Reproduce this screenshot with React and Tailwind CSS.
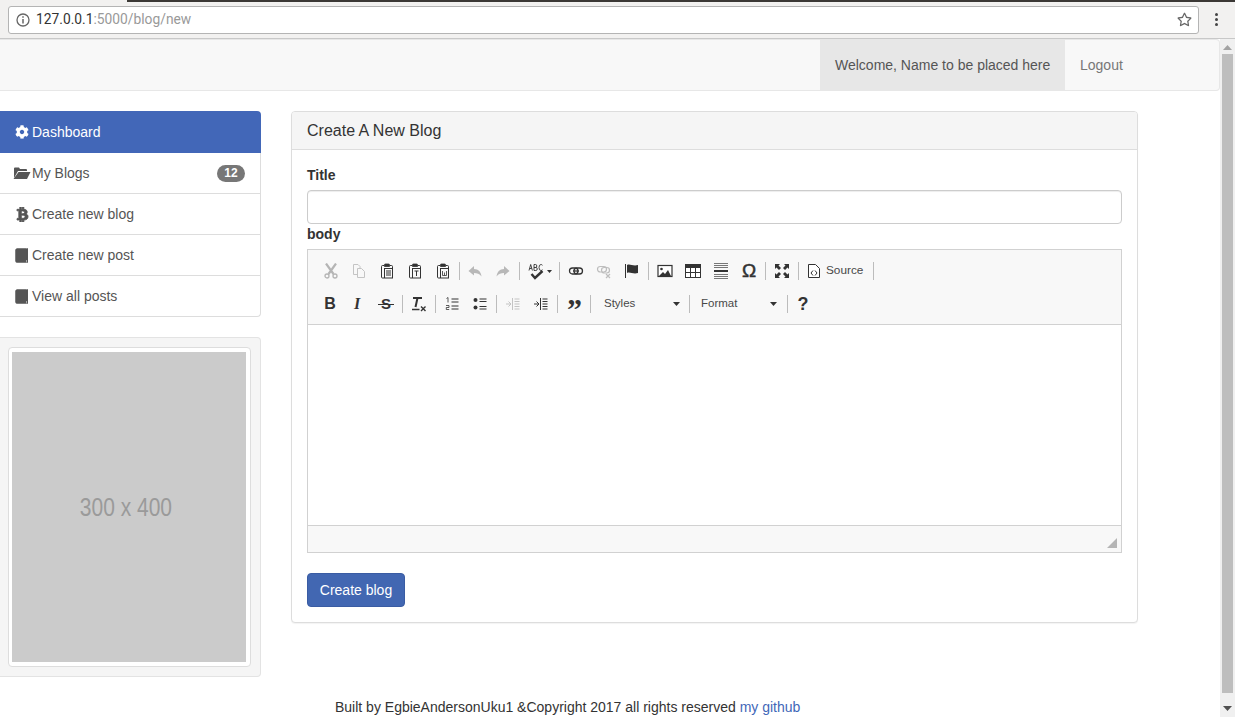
import React from "react";
import { FaCog, FaBtc, FaRegStar } from "react-icons/fa";

const I = ({ children, c = "#333", w = 16, h = 16 }) => (
  <svg width={w} height={h} viewBox={`0 0 ${w} ${h}`} fill="none" stroke={c} className="block">
    {children}
  </svg>
);

const Clip = ({ children }) => (
  <I c="#333">
    <path d="M5 2.500H3.500Q2.500 2.500 2.500 3.500V14Q2.500 15 3.500 15H5M11 2.500H12.500Q13.500 2.500 13.500 3.500V5.500" strokeWidth="1" />
    <path d="M5.500 3.500V1.800Q5.500 1 6.300 1H9.700Q10.500 1 10.500 1.800V3.500Z" fill="#333" strokeWidth="0.8" />
    {children}
  </I>
);

const icons = {
  cut: (
    <I c="#b5b5b5">
      <path d="M3 0.500l7.500 10.500M13 0.500L5.500 11" strokeWidth="2.200" />
      <circle cx="4" cy="13" r="2" strokeWidth="1.300" />
      <circle cx="12" cy="13" r="2" strokeWidth="1.300" />
    </I>
  ),
  copy: (
    <I c="#c4c4c4">
      <path d="M6 11.500H2.500V1.500H7L9 3.500V5M6.500 5.500H10.500L13.500 8.500V14.500H6.500Z" strokeWidth="1" />
    </I>
  ),
  paste: (
    <Clip>
      <rect x="5.500" y="5.500" width="8" height="9.500" fill="#f8f8f8" strokeWidth="1" />
      <path d="M7 8h5M7 10h5M7 12h5" strokeWidth="1" />
    </Clip>
  ),
  pasteT: (
    <Clip>
      <rect x="5.500" y="5.500" width="8" height="9.500" fill="#f8f8f8" strokeWidth="1" />
      <path d="M7.500 8h4M9.500 8v5" strokeWidth="1" />
    </Clip>
  ),
  pasteW: (
    <Clip>
      <rect x="5.500" y="5.500" width="8" height="9.500" fill="#f8f8f8" strokeWidth="1" />
      <path d="M7.500 8v4.500h4V8M9.500 9.500v3" strokeWidth="0.800" />
    </Clip>
  ),
  undo: (
    <I>
      <path d="M7 3L1.500 8 7 12.500V10C10 10 12.500 10.500 14.500 13.500 14 9 11.500 6 7 6Z" fill="#b8b8b8" stroke="none" />
    </I>
  ),
  redo: (
    <I>
      <path d="M9 3L14.500 8 9 12.500V10C6 10 3.500 10.500 1.500 13.500 2 9 4.500 6 9 6Z" fill="#b8b8b8" stroke="none" />
    </I>
  ),
  spell: (
    <div className="flex items-center">
      <svg width="18" height="17" viewBox="0 0 18 17" fill="none" stroke="#333" className="block">
        <path d="M1 7.500L2.700 1.500 4.400 7.500M1.700 5.500H3.700" strokeWidth="0.900" />
        <path d="M6 1.500V7.500H7.800Q9.300 7.500 9.300 5.900 9.300 4.500 7.800 4.500H6M6 4.500H7.600Q8.800 4.500 8.800 3 8.800 1.500 7.600 1.500H6" strokeWidth="0.900" />
        <path d="M14.500 2.300Q13.800 1.500 13 1.500 11 1.500 11 4.500 11 7.500 13 7.500 13.800 7.500 14.500 6.700" strokeWidth="0.900" />
        <path d="M3.500 11L7 15 14.500 8" strokeWidth="2.400" />
      </svg>
      <svg width="5" height="3" viewBox="0 0 5 3" className="ml-px mt-px"><path d="M0 0h5L2.500 3z" fill="#333" /></svg>
    </div>
  ),
  link: (
    <I>
      <rect x="1.500" y="5" width="8.500" height="6" rx="3" strokeWidth="1.300" />
      <rect x="6" y="5" width="8.500" height="6" rx="3" strokeWidth="1.300" />
      <path d="M5 8h6" strokeWidth="1.300" />
    </I>
  ),
  unlink: (
    <I c="#bdbdbd">
      <rect x="1.500" y="3.500" width="9" height="5.500" rx="2.700" strokeWidth="1.200" />
      <rect x="5.500" y="4.500" width="8" height="5.500" rx="2.700" strokeWidth="1.200" />
      <path d="M10 11l4 4M14 11l-4 4" strokeWidth="1.200" />
    </I>
  ),
  anchor: (
    <I>
      <path d="M1.500 1v14" strokeWidth="1" />
      <path d="M3 2C6 .5 9 3.500 14 2V10C9 11.500 6 8.500 3 10Z" fill="#333" stroke="none" />
    </I>
  ),
  image: (
    <I>
      <rect x="1" y="2.500" width="14" height="11" fill="#fff" strokeWidth="1.200" />
      <circle cx="4.500" cy="6" r="1.300" fill="#333" stroke="none" />
      <path d="M2 13l4-4 2 2 3-4 3 6z" fill="#333" stroke="none" />
    </I>
  ),
  table: (
    <I>
      <rect x="0.500" y="1.500" width="15" height="13" fill="#fff" strokeWidth="1" />
      <rect x="0.500" y="1.500" width="15" height="3" fill="#333" strokeWidth="1" />
      <path d="M0.500 9.500h15M5.500 4v10M10.500 4v10" strokeWidth="1" />
    </I>
  ),
  hr: (
    <I>
      <path d="M1 0.500h14M1 2.500h14M1 4.500h14M1 11.500h14M1 13.500h14M1 15.500h14" stroke="#777" strokeWidth="1" />
      <path d="M1 8h14" strokeWidth="2" />
    </I>
  ),
  omega: <span className="text-[19px] leading-4 font-normal text-[#333] [-webkit-text-stroke:0.5px_#333] font-['Liberation_Sans',sans-serif]">Ω</span>,
  max: (
    <I>
      <path d="M1 1h5L4.500 2.500 7 5 5 7 2.500 4.500 1 6ZM15 1v5L13.500 4.500 11 7 9 5 11.500 2.500 10 1ZM1 15v-5l1.500 1.500L5 9l2 2-2.500 2.500L6 15ZM15 15h-5l1.500-1.500L9 11l2-2 2.500 2.500L15 10Z" fill="#333" stroke="none" />
    </I>
  ),
  source: (
    <I>
      <path d="M2.500 1.500H9.500L13.500 5.500V14.500H2.500Z" fill="#fff" strokeWidth="1" />
      <path d="M7 7.500L5 10l2 2.500M9 7.500l2 2.500-2 2.500" strokeWidth="1" />
    </I>
  ),
  bold: <span className="text-[16px] leading-4 font-bold text-[#333] font-['Liberation_Sans',sans-serif]">B</span>,
  italic: <span className="relative left-[-1px] text-[16px] leading-4 font-bold italic text-[#333] font-['Liberation_Serif',serif]">I</span>,
  strike: (
    <span className="relative text-[15px] leading-4 font-bold text-[#333] font-['Liberation_Sans',sans-serif]">
      S<span className="absolute left-[-3px] right-[-3px] top-[8px] h-px bg-[#333]"></span>
    </span>
  ),
  removeFormat: (
    <I>
      <path d="M2 2h9" strokeWidth="2" />
      <path d="M6.500 2L4.500 11" strokeWidth="2" />
      <path d="M1 13.500h7.500" strokeWidth="1.500" />
      <path d="M10 10.500l4.500 4.500M14.500 10.500L10 15" strokeWidth="1.400" />
    </I>
  ),
  ol: (
    <I>
      <path d="M2.500 2.500L4 1.500V6.500" strokeWidth="0.800" />
      <path d="M2 9.500H5V11.500H2.300V13.500H5.200" strokeWidth="0.800" />
      <path d="M7.500 3h7M7.500 6h7M7.500 10h7M7.500 13h7" strokeWidth="1" />
    </I>
  ),
  ul: (
    <I>
      <circle cx="3.500" cy="4" r="2" fill="#333" stroke="none" />
      <circle cx="3.500" cy="11.500" r="2" fill="#333" stroke="none" />
      <path d="M7.500 3h7M7.500 5.500h7M7.500 10.500h7M7.500 13h7" strokeWidth="1" />
    </I>
  ),
  outdent: (
    <I c="#c4c4c4">
      <path d="M7.500 2v12M9.500 3h5M9.500 5.500h5M9.500 8h5M9.500 10.500h5M9.500 13h5" strokeWidth="1" />
      <path d="M1 8h4M3.500 5.500L6 8l-2.500 2.500" strokeWidth="1" />
    </I>
  ),
  indent: (
    <I>
      <path d="M7.500 2v12M9.500 3h5M9.500 5.500h5M9.500 8h5M9.500 10.500h5M9.500 13h5" strokeWidth="1" />
      <path d="M1 8h4M3.500 5.500L6 8l-2.500 2.500" strokeWidth="1" />
    </I>
  ),
  quote: <span className="relative top-[5px] text-[30px] leading-4 font-bold text-[#333] font-['Liberation_Serif',serif] tracking-[-1px]">”</span>,
  help: <span className="text-[18px] leading-4 font-bold text-[#333] font-['Liberation_Sans',sans-serif]">?</span>,
};

const Btn = ({ n, w = "w-[28px]" }) => (
  <div className={`h-[24px] ${w} flex items-center justify-center shrink-0`}>{icons[n]}</div>
);

const Sep = ({ cls = "ml-[2px] mr-[2px]" }) => <div className={`w-px h-[18px] bg-[#bcbcbc] shrink-0 ${cls}`}></div>;

const Combo = ({ label, w, pl = "pl-[13px]" }) => (
  <div className={`h-[24px] ${w} ${pl} flex items-center justify-between pr-[9px] shrink-0 text-[11.500px] text-[#484848]`}>
    <span>{label}</span>
    <svg width="7" height="4" viewBox="0 0 7 4"><path d="M0 0h7L3.500 4z" fill="#333" /></svg>
  </div>
);

const Folder = () => (
  <svg width="18" height="14" viewBox="0 0 18 14" className="shrink-0 ml-[-1px]">
    <path d="M1 12V2.500Q1 1.500 2 1.500H6L7 3H13Q14 3 14 4V5H5L1 12Z" fill="#555" />
    <path d="M5.500 6H17.500L14 13H0.500Z" fill="#555" />
  </svg>
);

const Book = () => (
  <svg width="14" height="15" viewBox="0 0 14 15" className="shrink-0">
    <path d="M2 0.500H13V12H3Q1.500 12 1.500 13T3 14H13V14.500H2Q0.500 14.500 0.500 13V2Q0.500 0.500 2 0.500Z" fill="#555" />
    <path d="M12 0.500H13V14.500H12Z" fill="#555" />
    <path d="M0.500 2Q0.500 .5 2 .5H11.500V14.500H2Q0.500 14.500 0.500 13Z" fill="#555" />
  </svg>
);

const Side = ({ icon, label, badge, last }) => (
  <div
    className={`flex items-center justify-between h-[41px] pl-[15px] pr-[15px] bg-white border-[#ddd] border-r text-[14px] text-[#555] border-b ${
      last ? "rounded-br-[4px]" : ""
    }`}
  >
    <div className="flex items-center gap-[3px]">
      <span className="w-[14px] flex justify-center">{icon}</span>
      <span>{label}</span>
    </div>
    {badge && (
      <span className="h-[17px] w-[28px] rounded-[10px] bg-[#777] text-white text-[12px] font-bold leading-[17px] text-center">
        {badge}
      </span>
    )}
  </div>
);

export default function App() {
  return (
    <div className="w-[1235px] h-[717px] overflow-hidden flex flex-col bg-white font-['Liberation_Sans',Arial,sans-serif] text-[14px] text-[#333]">
      {/* browser chrome */}
      <div className="relative h-[39px] shrink-0 bg-[#f2f1f0] border-b border-[#c8c8c8] flex items-center pl-[8px] pr-[10px] pt-[1px]">
        <div className="absolute top-0 left-[127px] right-0 h-[2px] bg-[#3b3835]"></div>
        <div className="w-[1191px] h-[28px] bg-white border border-[#b4b4b4] rounded-[3px] flex items-center pl-[7px] pr-[5px]">
          <svg width="14" height="14" viewBox="0 0 14 14" fill="none" stroke="#666" className="shrink-0">
            <circle cx="7" cy="7" r="6" strokeWidth="1.300" />
            <path d="M7 6v4.500" strokeWidth="1.500" />
            <path d="M7 3.300v1.500" strokeWidth="1.500" />
          </svg>
          <span className="ml-[6px] text-[13.800px] text-[#333] font-['Roboto',sans-serif]">
            127.0.0.1<span className="text-[#999]">:5000/blog/new</span>
          </span>
          <FaRegStar className="ml-auto text-[#666] w-[15px] h-[15px] relative left-[-1px]" />
        </div>
        <div className="ml-[15px] flex flex-col gap-[2px] items-center w-[4px]">
          <span className="w-[3px] h-[3px] rounded-full bg-[#444]"></span>
          <span className="w-[3px] h-[3px] rounded-full bg-[#444]"></span>
          <span className="w-[3px] h-[3px] rounded-full bg-[#444]"></span>
        </div>
      </div>

      <div className="flex flex-1 min-h-0">
        <div className="w-[1220px] shrink-0 flex flex-col">
          {/* navbar */}
          <div className="h-[52px] shrink-0 bg-[#f8f8f8] border-b border-t border-r border-[#e7e7e7] rounded-r-[4px] flex justify-end pr-[78px]">
            <div className="w-[245px] h-[50px] bg-[#e7e7e7] text-[#555] flex items-center pl-[15px]">
              Welcome, Name to be placed here
            </div>
            <div className="w-[76px] h-[50px] text-[#777] flex items-center pl-[15px]">Logout</div>
          </div>

          {/* content */}
          <div className="flex gap-[30px] pt-[20px]">
            <div className="w-[261px] shrink-0 flex flex-col gap-[20px]">
              <div className="flex flex-col">
                <div className="h-[42px] pl-[15px] flex items-center gap-[3px] bg-[#4267b8] text-white rounded-tr-[4px]">
                  <span className="w-[14px] flex justify-center">
                    <FaCog className="w-[14px] h-[14px]" />
                  </span>
                  <span>Dashboard</span>
                </div>
                <Side icon={<Folder />} label="My Blogs" badge="12" />
                <Side icon={<FaBtc className="w-[13px] h-[15px] stroke-[30px]" />} label="Create new blog" />
                <Side icon={<Book />} label="Create new post" />
                <Side icon={<Book />} label="View all posts" last />
              </div>
              <div className="h-[340px] bg-[#f5f5f5] border border-l-0 border-[#e3e3e3] rounded-r-[4px] pl-[8px] pr-[9px] pt-[9px] pb-[9px]">
                <div className="h-[320px] bg-white border border-[#ddd] rounded-[4px] p-[4px] pl-[3px]">
                  <div className="w-[234px] h-[310px] bg-[#cbcbcb] flex items-center justify-center pt-[2px] pr-[6px]">
                    <span className="text-[25px] text-[#9a9a9a] scale-x-[0.84] whitespace-nowrap">300 x 400</span>
                  </div>
                </div>
              </div>
            </div>

            {/* panel */}
            <div className="w-[847px] h-[512px] shrink-0 bg-white border border-[#ddd] rounded-[4px] shadow-[0_1px_1px_rgba(0,0,0,0.05)]">
              <div className="h-[38px] bg-[#f5f5f5] border-b border-[#ddd] rounded-t-[3px] flex items-center pl-[15px] text-[16px] text-[#333]">
                Create A New Blog
              </div>
              <div className="p-[15px]">
                <label className="block font-bold leading-[20px] mb-[5px]">Title</label>
                <div className="h-[34px] border border-[#ccc] rounded-[4px] bg-white shadow-[inset_0_1px_1px_rgba(0,0,0,0.075)]"></div>
                <label className="block font-bold leading-[20px] mb-[5px]">body</label>
                <div className="h-[304px] border border-[#d1d1d1] flex flex-col">
                  <div className="h-[75px] shrink-0 bg-[#f8f8f8] border-b border-[#d1d1d1] pl-[9px] pt-[9px] flex flex-col gap-[9px]">
                    <div className="flex items-center">
                      <Btn n="cut" />
                      <Btn n="copy" />
                      <Btn n="paste" />
                      <Btn n="pasteT" />
                      <Btn n="pasteW" />
                      <Sep cls="ml-[1.500px] mr-[1.500px]" />
                      <Btn n="undo" />
                      <Btn n="redo" />
                      <Sep />
                      <Btn n="spell" w="w-[35px]" />
                      <Sep />
                      <Btn n="link" />
                      <Btn n="unlink" />
                      <Btn n="anchor" />
                      <Sep />
                      <Btn n="image" />
                      <Btn n="table" />
                      <Btn n="hr" />
                      <Btn n="omega" />
                      <Sep />
                      <Btn n="max" />
                      <Sep />
                      <div className="h-[24px] w-[70px] flex items-center pl-[5px] gap-[4px] text-[11.800px] text-[#484848] shrink-0">
                        {icons.source}
                        <span>Source</span>
                      </div>
                      <Sep />
                    </div>
                    <div className="flex items-center -ml-px">
                      <Btn n="bold" />
                      <Btn n="italic" />
                      <Btn n="strike" />
                      <Sep />
                      <Btn n="removeFormat" />
                      <Sep />
                      <Btn n="ol" />
                      <Btn n="ul" />
                      <Sep />
                      <Btn n="outdent" />
                      <Btn n="indent" />
                      <Sep />
                      <Btn n="quote" />
                      <Sep cls="ml-[2px] mr-0" />
                      <Combo label="Styles" w="w-[98px]" />
                      <Sep cls="" />
                      <Combo label="Format" w="w-[96px]" pl="pl-[11px]" />
                      <Sep cls="ml-[1px] mr-[1px]" />
                      <Btn n="help" />
                    </div>
                  </div>
                  <div className="h-[200px] shrink-0 bg-white"></div>
                  <div className="flex-1 bg-[#f8f8f8] border-t border-[#d1d1d1] flex items-end justify-end pr-[4px] pb-[4px]">
                    <svg width="10" height="10" viewBox="0 0 10 10"><path d="M10 0V10H0Z" fill="#b5b5b5" /></svg>
                  </div>
                </div>
                <button className="mt-[20px] w-[98px] h-[34px] rounded-[4px] bg-[#4267b2] border border-[#3a5ca3] text-white text-[14px]">
                  Create blog
                </button>
              </div>
            </div>
          </div>

          {/* footer */}
          <div className="mt-[20px] pl-[335px] leading-[20px] text-[14px] text-[#333] whitespace-nowrap">
            Built by EgbieAndersonUku1 &amp;Copyright 2017 all rights reserved <span className="text-[#4267b8]">my github</span>
          </div>
        </div>

        {/* scrollbar */}
        <div className="w-[15px] shrink-0 bg-[#f0f0f0] flex flex-col items-center">
          <svg width="9" height="5" viewBox="0 0 9 5" className="mt-[6px]"><path d="M0 5h9L4.500 0z" fill="#a3a3a3" /></svg>
          <div className="w-[11px] h-[639px] mt-[4px] bg-[#bebebe]"></div>
          <svg width="9" height="5" viewBox="0 0 9 5" className="mt-[13px]"><path d="M0 0h9L4.500 5z" fill="#505050" /></svg>
        </div>
      </div>
    </div>
  );
}
